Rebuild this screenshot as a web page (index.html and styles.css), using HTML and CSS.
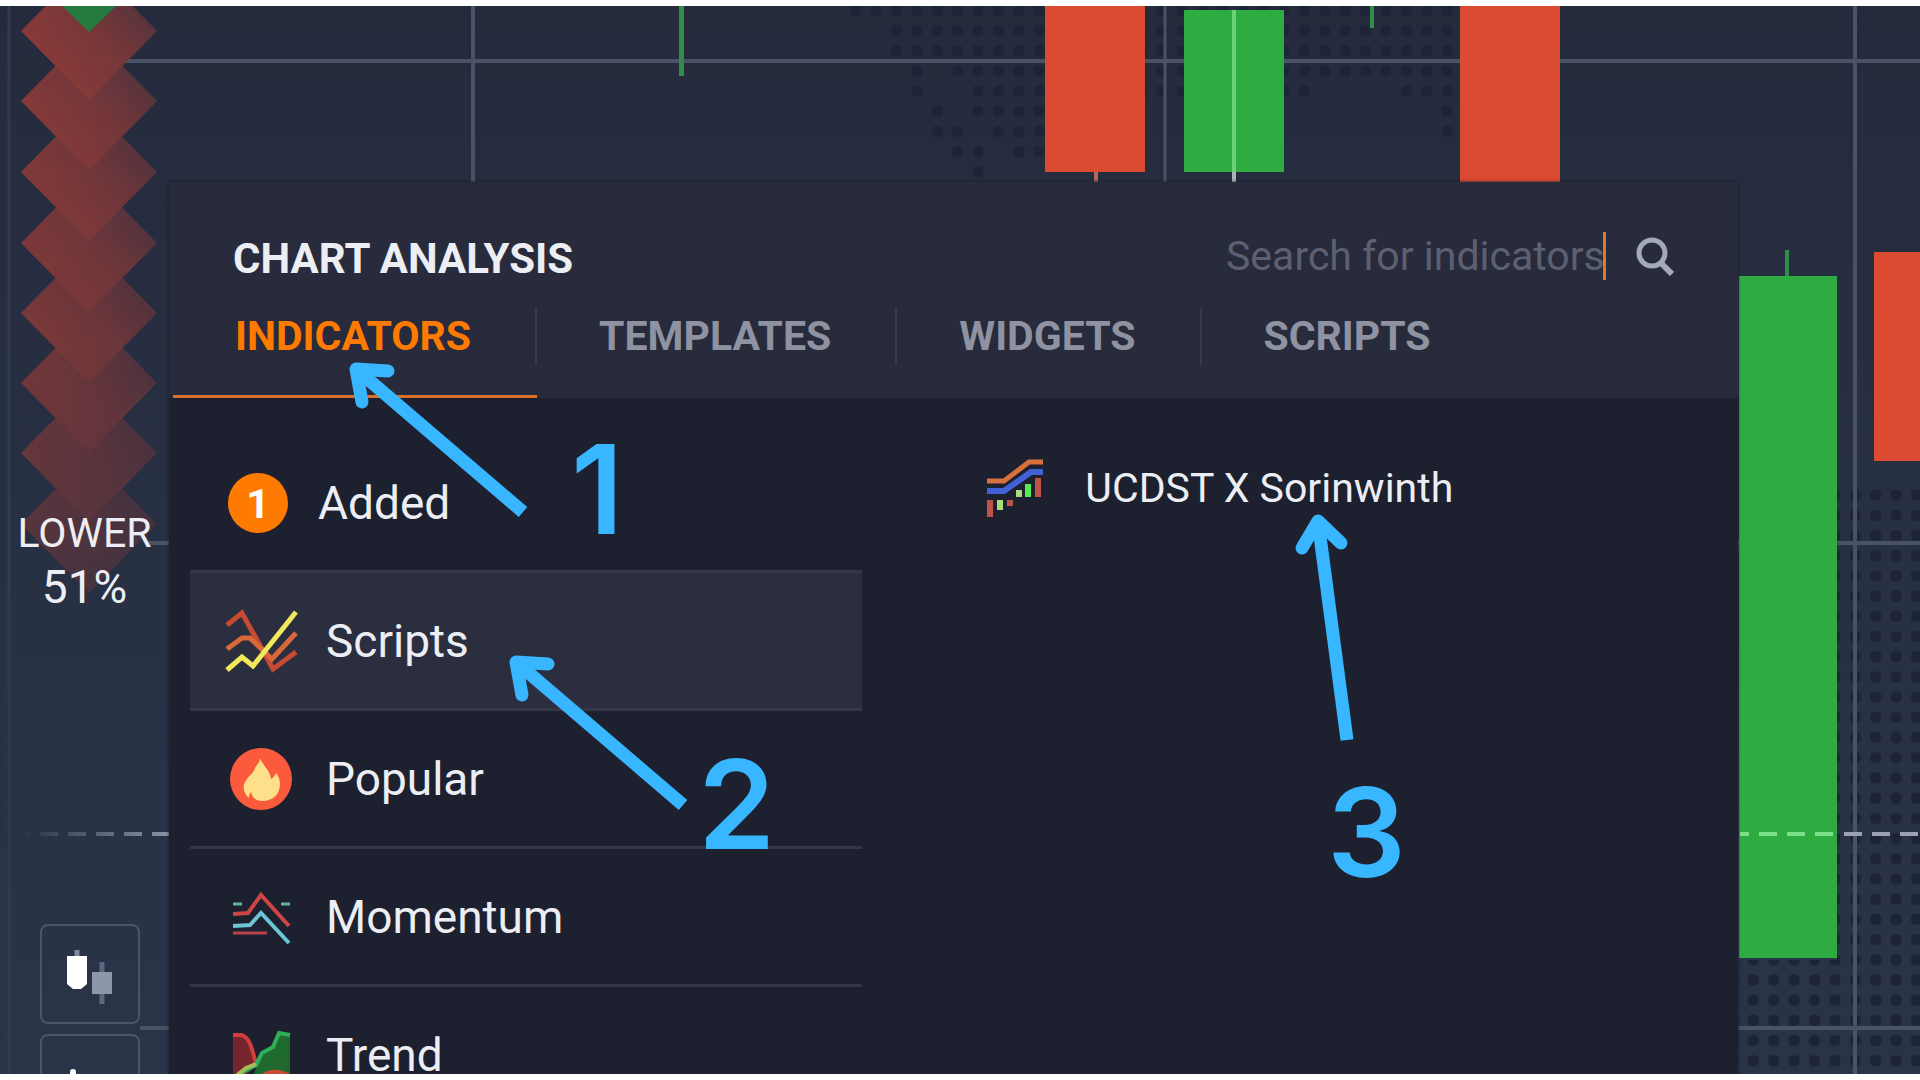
FILE: index.html
```
<!DOCTYPE html>
<html lang="en">
<head>
  <meta charset="UTF-8" />
  <meta name="viewport" content="width=device-width, initial-scale=1.0" />
  <title>Chart Analysis - Indicators</title>
  <link rel="stylesheet" href="styles.css">
</head>
<body>
  <main class="screen">
    <svg class="chart" viewBox="0 6 1920 1068" preserveAspectRatio="xMinYMin slice" aria-hidden="true">
      <defs>
        <pattern id="dots" x="886" y="20" width="20.4" height="20.2" patternUnits="userSpaceOnUse">
          <rect x="5" y="5" width="11" height="11" rx="4" fill="#1e2437" />
        </pattern>
        <linearGradient id="red" x1="0.2" y1="0.75" x2="0.8" y2="0.2">
          <stop offset="0" stop-color="#8e3b38" />
          <stop offset="0.5" stop-color="#7b3839" />
          <stop offset="1" stop-color="#58343d" />
        </linearGradient>
        <linearGradient id="down" x1="0" y1="0" x2="0" y2="1">
          <stop offset="0" stop-color="#fff" />
          <stop offset="0.6" stop-color="#ccc" />
          <stop offset="0.85" stop-color="#888" />
          <stop offset="1" stop-color="#444" />
        </linearGradient>
        <mask id="diamond-fade">
          <rect x="0" y="-40" width="180" height="640" fill="url(#down)" />
        </mask>
        <linearGradient id="fade" gradientUnits="userSpaceOnUse" x1="20" y1="0" x2="170" y2="0">
          <stop offset="0" stop-color="#8a93a5" stop-opacity="0" />
          <stop offset="1" stop-color="#8a93a5" />
        </linearGradient>
      </defs>

      <!-- world map dots -->
      <g fill="url(#dots)">
        <path d="M845 6H1460V61H886V20H845Z" />
        <path d="M907 61H927V101H907ZM927 101H947V142H927ZM947 61H1460V81H947ZM967 81H1315V101H967ZM1395 81H1460V101H1395ZM967 101H1045V121H967ZM1435 101H1460V142H1435ZM947 121H967V162H947ZM988 121H1045V142H988ZM967 142H988V182H967ZM1008 142H1045V162H1008Z" />
        <path d="M1837 485H1920V1074H1738V960H1837Z" />
      </g>

      <!-- grid -->
      <g stroke="#4a5266" stroke-width="4">
        <path d="M9 6V1074" stroke="#303b52" stroke-width="3" />
        <path d="M100 61H1920M148 543H1920M140 1028H1920M473 6V1074M1855 6V1074" />
        <path d="M1165 6V1074" stroke-width="3" />
      </g>
      <path d="M20 834H170" stroke="url(#fade)" stroke-width="4" stroke-dasharray="18 10" stroke-dashoffset="-20" />

      <!-- candles -->
      <g fill="#db4b31">
        <path d="M1045 6h100v166h-100ZM1460 6h100v178h-100ZM1874 252h46v209h-46Z" />
        <path d="M1094 172h4v12h-4Z" fill="#b4655c" />
      </g>
      <g fill="#2eac42">
        <path d="M1184 10h100v162h-100ZM1739 276h98v682h-98Z" />
        <path d="M679 6h5v70h-5ZM1370 6h4v22h-4ZM1785 250h4v26h-4Z" fill="#318d49" />
      </g>
      <path d="M1234 10V172" stroke="#6bd077" stroke-width="4" />
      <path d="M1234 172V184" stroke="#a9b0b8" stroke-width="4" />
      <path d="M1740 834H1837" stroke="#7be08a" stroke-width="4" stroke-dasharray="18 10" stroke-dashoffset="9" />
      <path d="M1844 834H1920" stroke="#9aa1b0" stroke-width="4" stroke-dasharray="18 10" />

      <!-- trend diamonds -->
      <g fill="url(#red)" mask="url(#diamond-fade)">
        <path d="M89 455L157 524L89 593L21 524Z" />
        <path d="M89 384L157 453L89 522L21 453Z" />
        <path d="M89 314L157 383L89 452L21 383Z" />
        <path d="M89 244L157 313L89 382L21 313Z" />
        <path d="M89 174L157 243L89 312L21 243Z" />
        <path d="M89 103L157 172L89 241L21 172Z" />
        <path d="M89 32L157 101L89 170L21 101Z" />
        <path d="M89 -38L157 31L89 100L21 31Z" />
      </g>
      <path d="M62 6H116L89 32Z" fill="#257a40" />
    </svg>

    <aside class="side">
      <div class="lower">
        <div class="lower-label">LOWER</div>
        <div class="lower-value">51%</div>
      </div>
      <div class="tools">
        <button class="tool" type="button" aria-label="Chart type">
          <svg width="60" height="60" viewBox="0 0 60 60">
            <path d="M17 6v8M17 42v3" stroke="#7f899b" stroke-width="5" />
            <path d="M7 12h20v28l-6 5h-8l-6-5Z" fill="#fff" />
            <path d="M42 18v42" stroke="#5d6880" stroke-width="5" />
            <path d="M32 28h20v22H32Z" fill="#8d97a9" />
          </svg>
        </button>
        <button class="tool" type="button" aria-label="Drawing tools">
          <svg width="60" height="60" viewBox="0 0 60 60">
            <path d="M13 18V44M13 44L30 32L50 44" fill="none" stroke="#fff" stroke-width="6" stroke-linecap="round" />
          </svg>
        </button>
      </div>
    </aside>

    <section class="panel">
      <header class="panel-header">
        <div class="title-row">
          <h1>CHART ANALYSIS</h1>
          <form class="search">
            <input type="text" placeholder="Search for indicators" aria-label="Search for indicators" />
            <button type="button" aria-label="Search">
              <svg width="40" height="40" viewBox="0 0 40 40" fill="none" stroke="#a3a9bb">
                <circle cx="16" cy="17" r="13" stroke-width="5" />
                <path d="M25 27L36 38" stroke-width="6" />
              </svg>
            </button>
          </form>
        </div>
        <nav class="tabs">
          <button class="tab active" type="button"><span>INDICATORS</span></button>
          <button class="tab" type="button"><span>TEMPLATES</span></button>
          <button class="tab" type="button"><span>WIDGETS</span></button>
          <button class="tab" type="button"><span>SCRIPTS</span></button>
        </nav>
      </header>

      <div class="panel-body">
        <div class="categories">
          <button class="category" type="button">
            <span class="badge">1</span>
            Added
          </button>
          <button class="category selected" type="button">
            <svg class="icon" viewBox="0 0 66 66" fill="none" stroke-width="5">
              <path d="M-1 17L14 5L45 61L68 44" stroke="#c74a35" />
              <path d="M-1 41L14 30H22L44 51L68 25" stroke="#d9683a" />
              <path d="M-1 62L14 49L25 58L68 4" stroke="#f2e85c" />
            </svg>
            Scripts
          </button>
          <button class="category" type="button">
            <svg class="icon" viewBox="0 0 66 66">
              <circle cx="33" cy="33" r="31" fill="#fb5a3c" />
              <path d="M32 12C35 20 42 24 43 33C45 32 47 30 48 27C52 32 53 38 51 44C49 51 42 55 35 55C27 55 24 51 23 46C21 48 21 50 21 52C16 48 14 41 17 36C20 30 26 27 27 22C29 18 32 17 32 12Z" fill="#ffe08a" />
            </svg>
            Popular
          </button>
          <button class="category" type="button">
            <svg class="icon" viewBox="0 0 66 66" fill="none" stroke-width="4">
              <path d="M5 30L20 29L33 11L61 42" stroke="#cf4446" />
              <path d="M5 42L22 41L33 29L61 59" stroke="#6cc5d6" />
              <path d="M5 49H39" stroke="#b8434b" stroke-width="3" />
              <path d="M5 20H14M53 20H62" stroke="#5fb49c" stroke-width="3" />
            </svg>
            Momentum
          </button>
          <button class="category" type="button">
            <svg class="icon" viewBox="0 0 66 66">
              <path d="M5 12H16C23 16 25 24 27 44L5 66Z" fill="#74252e" />
              <path d="M29 44L36 31L45 25L50 12H62V66H20Z" fill="#20692e" />
              <path d="M30 56Q42 42 62 52V66H30Z" fill="#c84a32" />
              <path d="M5 13H14C23 17 24 28 28 42" fill="none" stroke="#d23d3d" stroke-width="4" />
              <path d="M8 54L28 43L34 31L45 25L51 11L62 13" fill="none" stroke="#2fae58" stroke-width="4" />
              <path d="M8 54L18 46L28 42" fill="none" stroke="#a5bd55" stroke-width="4" />
            </svg>
            Trend
          </button>
        </div>

        <div class="results">
          <button class="result" type="button">
            <svg width="58" height="62" viewBox="0 0 58 62">
              <path d="M0 24H17L42 5H56" fill="none" stroke="#d7703f" stroke-width="5" />
              <path d="M0 34H17L44 15H56" fill="none" stroke="#4261d6" stroke-width="6" />
              <path d="M0 43h6v17h-6ZM20 43h6v6h-6ZM48 21h6v19h-6Z" fill="#bd5448" />
              <path d="M10 43h6v10h-6ZM29 33h6v7h-6Z" fill="#a7dc76" />
              <path d="M38 27h6v13h-6Z" fill="#53ec55" />
            </svg>
            UCDST X Sorinwinth
          </button>
        </div>
      </div>
    </section>

    <!-- step arrows and numbers -->
    <svg class="notes" viewBox="0 6 1920 1068" preserveAspectRatio="xMinYMin slice">
      <g fill="none" stroke="#38b6ff" stroke-width="13" stroke-linejoin="round">
        <path d="M523 512L356 369" />
        <path d="M388 371L356 369L362 402" stroke-linecap="round" />
        <path d="M683 805L516 662" />
        <path d="M548 664L516 662L522 695" stroke-linecap="round" />
        <path d="M1347 740L1318 521" />
        <path d="M1302 548L1318 521L1341 543" stroke-linecap="round" />
      </g>
      <text x="571" y="534">1</text>
      <text x="698" y="849">2</text>
      <text x="1327" y="877">3</text>
    </svg>
  </main>
</body>
</html>
```
FILE: styles.css
```
:root {
  --chart-top: #252b3d;
  --chart-bottom: #2a3449;
  --panel-header: #272b3b;
  --panel-body: #1d202f;
  --row-selected: #2a2e3e;
  --line: #333748;
  --accent: #ff7a00;
  --note: #38b6ff;
  --text: #eceef4;
  --text-muted: #8e92a1;
}

* {
  box-sizing: border-box;
  margin: 0;
  padding: 0;
}

body {
  font-family: Roboto, sans-serif;
  background: #fff;
  color: var(--text);
  padding: 6px 0;
}

button {
  font: inherit;
  color: inherit;
  background: none;
  border: 0;
  cursor: pointer;
}

.screen {
  position: relative;
  display: grid;
  grid-template-columns: 169px 1fr 182px;
  height: calc(100vh - 12px);
  overflow: hidden;
  background: linear-gradient(var(--chart-top), var(--chart-bottom));
}

.chart,
.notes {
  position: absolute;
  top: 0;
  left: 0;
  width: 100%;
  height: 100%;
}

.notes {
  pointer-events: none;
}

.notes text {
  font-family: Inter, sans-serif;
  font-size: 124px;
  font-weight: 600;
  fill: var(--note);
}

/* left side */
.side {
  position: relative;
  display: flex;
  flex-direction: column;
  gap: 310px;
  padding-top: 500px;
}

.lower {
  text-align: center;
}

.lower-label {
  font-size: 41px;
  line-height: 54px;
}

.lower-value {
  font-size: 46px;
  line-height: 54px;
}

.tools {
  display: flex;
  flex-direction: column;
  gap: 10px;
  padding-left: 40px;
}

.tool {
  display: grid;
  place-items: center;
  flex: none;
  width: 100px;
  height: 100px;
  border: 2px solid #4a546a;
  border-radius: 8px;
}

/* panel */
.panel {
  position: relative;
  margin-top: 176px;
  height: 1000px;
  background: var(--panel-body);
  box-shadow: 0 0 3px #171b28;
}

.panel-header {
  padding-top: 50px;
  background: var(--panel-header);
}

.title-row {
  display: flex;
  justify-content: space-between;
  padding: 0 62px 0 64px;
}

h1 {
  font-size: 42px;
  line-height: 54px;
  font-weight: 700;
}

.search {
  display: flex;
  align-items: center;
  gap: 30px;
  height: 48px;
}

.search input {
  width: 380px;
  height: 48px;
  font: inherit;
  font-size: 41px;
  color: var(--text);
  background: none;
  border: 0;
  border-right: 3px solid #d97a2e;
  outline: 0;
}

.search input::placeholder {
  color: #5c6070;
}

.search svg {
  display: block;
}

.tabs {
  display: flex;
  padding-left: 4px;
  margin-top: 22px;
}

.tab {
  padding-bottom: 30px;
  border-bottom: 3px solid transparent;
  font-size: 41px;
  font-weight: 700;
  color: var(--text-muted);
}

.tab span {
  display: block;
  padding: 0 64px 0 62px;
  line-height: 57px;
  border-right: 2px solid #363b4c;
}

.tab:last-child span {
  border-right: 0;
}

.tab.active {
  color: var(--accent);
  border-bottom-color: #d9712b;
}

.panel-body {
  display: grid;
  grid-template-columns: 43fr 56fr;
  padding: 37px 0 0 21px;
}

.category {
  display: flex;
  align-items: center;
  gap: 30px;
  width: 100%;
  height: 138px;
  padding-left: 38px;
  border-bottom: 3px solid var(--line);
  font-size: 46px;
  text-align: left;
}

.category.selected {
  background: var(--row-selected);
}

.icon {
  width: 66px;
  height: 66px;
  margin-right: 2px;
  overflow: visible;
}

.badge {
  width: 60px;
  height: 60px;
  border-radius: 50%;
  background: var(--accent);
  color: #fff;
  font-size: 41px;
  font-weight: 700;
  line-height: 62px;
  text-align: center;
}

.result {
  display: flex;
  align-items: center;
  gap: 40px;
  height: 106px;
  padding-left: 125px;
  font-size: 41px;
}
```
